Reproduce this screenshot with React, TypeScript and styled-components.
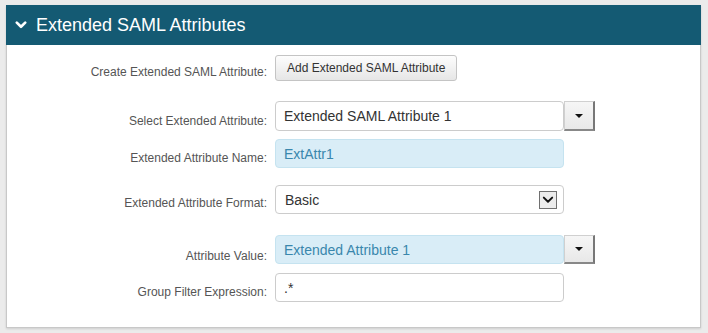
import React from "react";
import styled, { createGlobalStyle } from "styled-components";

const GlobalStyle = createGlobalStyle`
  html, body {
    margin: 0;
    padding: 0;
    background: #ebebeb;
    font-family: "Liberation Sans", Arial, sans-serif;
  }
`;

const Page = styled.div`
  padding: 5px 7px 6px 6px;
`;

const Panel = styled.section`
  background: #fff;
  border: 1px solid #c8c8c8;
  border-top: none;
  box-shadow: 0 1px 2px rgba(0, 0, 0, 0.12);
`;

const Header = styled.header`
  display: flex;
  align-items: center;
  gap: 9px;
  height: 40px;
  margin: 0 -1px;
  padding: 0 9px;
  background: #145a73;
  color: #fff;
  font-size: 18px;
`;

const Body = styled.div`
  display: flex;
  flex-direction: column;
  padding: 10px 0 25px;
`;

const Row = styled.div<{ $gap: number }>`
  display: flex;
  align-items: center;
  gap: 8px;
  margin-top: ${(p) => p.$gap}px;
`;

const Label = styled.label<{ $drop?: number }>`
  width: 260px;
  text-align: right;
  font-size: 12px;
  color: #555;
  padding-top: ${(p) => p.$drop ?? 8}px;
`;

const Button = styled.button`
  height: 26px;
  padding: 0 11px;
  font-family: inherit;
  font-size: 12px;
  color: #333;
  background: linear-gradient(#fdfdfd, #e6e6e6);
  border: 1px solid #c4c4c4;
  border-radius: 3px;
`;

const TextInput = styled.input<{ $info?: boolean; $h?: number }>`
  box-sizing: border-box;
  width: 289px;
  height: ${(p) => p.$h ?? 29}px;
  padding: 0 8px;
  font-family: inherit;
  font-size: 14px;
  color: ${(p) => (p.$info ? "#3a87ad" : "#333")};
  background: ${(p) => (p.$info ? "#d9edf7" : "#fff")};
  border: 1px solid ${(p) => (p.$info ? "#c5e3f0" : "#ccc")};
  border-radius: 4px;
  outline: none;
`;

const Combo = styled.div`
  display: flex;
`;

const DropButton = styled.button`
  display: flex;
  align-items: center;
  justify-content: center;
  width: 31px;
  padding: 0;
  background: linear-gradient(#f6f6f6, #e8e8e8);
  border: 1px solid #d0d0d0;
  border-right: 2px solid #777;
  border-bottom: 2px solid #888;
`;

const Caret = styled.span`
  width: 0;
  height: 0;
  border-left: 4px solid transparent;
  border-right: 4px solid transparent;
  border-top: 4px solid #111;
`;

const SelectBox = styled.div`
  box-sizing: border-box;
  display: flex;
  align-items: center;
  justify-content: space-between;
  width: 289px;
  height: 29px;
  padding: 0 6px 0 9px;
  font-size: 14px;
  color: #333;
  background: #fff;
  border: 1px solid #ccc;
  border-radius: 4px;
`;

const SelectArrow = styled.span`
  box-sizing: border-box;
  display: flex;
  align-items: center;
  justify-content: center;
  width: 18px;
  height: 18px;
  background: #ececec;
  border: 1px solid #707070;
`;

function Chevron({ size, weight }: { size: number; weight: number }) {
  return (
    <svg width={size} height={size} viewBox="0 0 10 10" fill="none">
      <path
        d="M1.5 3 L5 6.5 L8.5 3"
        stroke="currentColor"
        strokeWidth={weight}
        strokeLinecap="round"
        strokeLinejoin="round"
      />
    </svg>
  );
}

const WhiteIcon = styled.span`
  display: flex;
  color: #fff;
`;

const DarkIcon = styled.span`
  display: flex;
  color: #111;
`;

export default function App() {
  return (
    <>
      <GlobalStyle />
      <Page>
        <Panel>
          <Header>
            <WhiteIcon>
              <Chevron size={12} weight={2.2} />
            </WhiteIcon>
            Extended SAML Attributes
          </Header>
          <Body>
            <Row $gap={0}>
              <Label>Create Extended SAML Attribute:</Label>
              <Button>Add Extended SAML Attribute</Button>
            </Row>
            <Row $gap={20}>
              <Label $drop={10}>Select Extended Attribute:</Label>
              <Combo>
                <TextInput $h={30} readOnly value="Extended SAML Attribute 1" />
                <DropButton>
                  <Caret />
                </DropButton>
              </Combo>
            </Row>
            <Row $gap={8}>
              <Label>Extended Attribute Name:</Label>
              <TextInput $info readOnly value="ExtAttr1" />
            </Row>
            <Row $gap={17}>
              <Label $drop={6}>Extended Attribute Format:</Label>
              <SelectBox>
                Basic
                <SelectArrow>
                  <DarkIcon>
                    <Chevron size={12} weight={1.6} />
                  </DarkIcon>
                </SelectArrow>
              </SelectBox>
            </Row>
            <Row $gap={21}>
              <Label $drop={13}>Attribute Value:</Label>
              <Combo>
                <TextInput $info readOnly value="Extended Attribute 1" />
                <DropButton>
                  <Caret />
                </DropButton>
              </Combo>
            </Row>
            <Row $gap={9}>
              <Label>Group Filter Expression:</Label>
              <TextInput readOnly value=".*" />
            </Row>
          </Body>
        </Panel>
      </Page>
    </>
  );
}
